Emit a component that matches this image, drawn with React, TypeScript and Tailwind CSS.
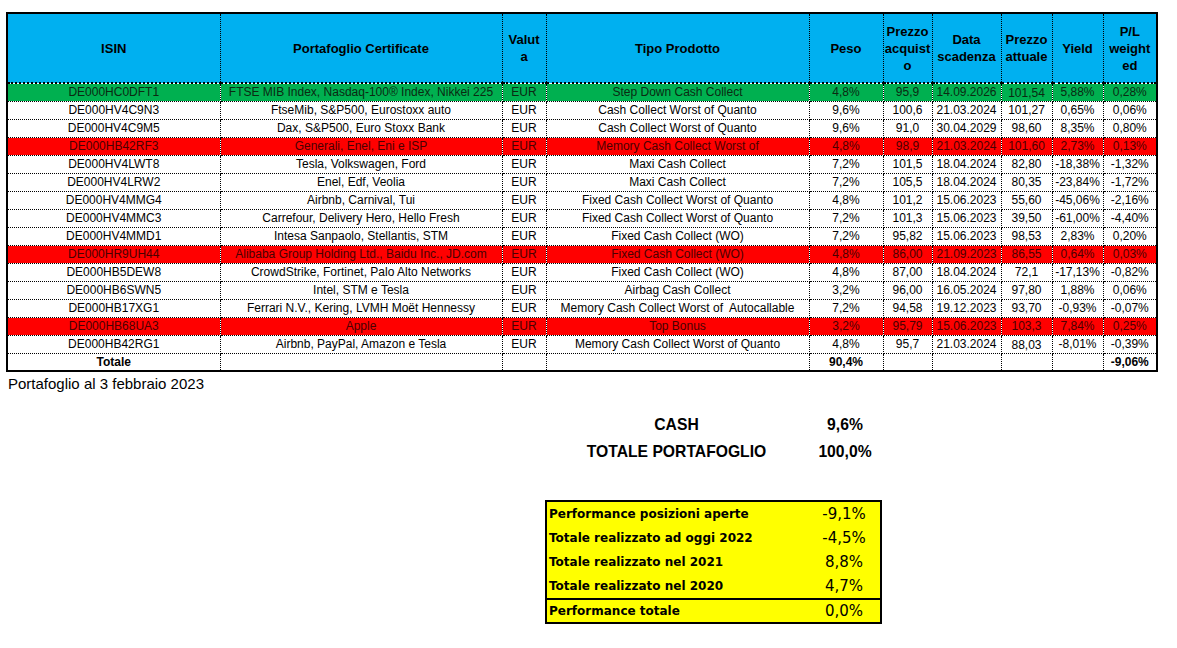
import React from "react";

type Row = {
  isin: string;
  port: string;
  tipo: string;
  peso: string;
  pa: string;
  ds: string;
  pat: string;
  y: string;
  pl: string;
  c?: "green" | "red";
  low?: boolean;
};

const rows: Row[] = [
  { isin: "DE000HC0DFT1", port: "FTSE MIB Index, Nasdaq-100® Index, Nikkei 225", tipo: "Step Down Cash Collect", peso: "4,8%", pa: "95,9", ds: "14.09.2026", pat: "101,54", y: "5,88%", pl: "0,28%", c: "green", low: true },
  { isin: "DE000HV4C9N3", port: "FtseMib, S&P500, Eurostoxx auto", tipo: "Cash Collect Worst of Quanto", peso: "9,6%", pa: "100,6", ds: "21.03.2024", pat: "101,27", y: "0,65%", pl: "0,06%" },
  { isin: "DE000HV4C9M5", port: "Dax, S&P500, Euro Stoxx Bank", tipo: "Cash Collect Worst of Quanto", peso: "9,6%", pa: "91,0", ds: "30.04.2029", pat: "98,60", y: "8,35%", pl: "0,80%" },
  { isin: "DE000HB42RF3", port: "Generali, Enel, Eni e ISP", tipo: "Memory Cash Collect Worst of", peso: "4,8%", pa: "98,9", ds: "21.03.2024", pat: "101,60", y: "2,73%", pl: "0,13%", c: "red" },
  { isin: "DE000HV4LWT8", port: "Tesla, Volkswagen, Ford", tipo: "Maxi Cash Collect", peso: "7,2%", pa: "101,5", ds: "18.04.2024", pat: "82,80", y: "-18,38%", pl: "-1,32%" },
  { isin: "DE000HV4LRW2", port: "Enel, Edf, Veolia", tipo: "Maxi Cash Collect", peso: "7,2%", pa: "105,5", ds: "18.04.2024", pat: "80,35", y: "-23,84%", pl: "-1,72%" },
  { isin: "DE000HV4MMG4", port: "Airbnb, Carnival, Tui", tipo: "Fixed Cash Collect Worst of Quanto", peso: "4,8%", pa: "101,2", ds: "15.06.2023", pat: "55,60", y: "-45,06%", pl: "-2,16%" },
  { isin: "DE000HV4MMC3", port: "Carrefour, Delivery Hero, Hello Fresh", tipo: "Fixed Cash Collect Worst of Quanto", peso: "7,2%", pa: "101,3", ds: "15.06.2023", pat: "39,50", y: "-61,00%", pl: "-4,40%" },
  { isin: "DE000HV4MMD1", port: "Intesa Sanpaolo, Stellantis, STM", tipo: "Fixed Cash Collect (WO)", peso: "7,2%", pa: "95,82", ds: "15.06.2023", pat: "98,53", y: "2,83%", pl: "0,20%" },
  { isin: "DE000HR9UH44", port: "Alibaba Group Holding Ltd., Baidu Inc., JD.com", tipo: "Fixed Cash Collect (WO)", peso: "4,8%", pa: "86,00", ds: "21.09.2023", pat: "86,55", y: "0,64%", pl: "0,03%", c: "red" },
  { isin: "DE000HB5DEW8", port: "CrowdStrike, Fortinet, Palo Alto Networks", tipo: "Fixed Cash Collect (WO)", peso: "4,8%", pa: "87,00", ds: "18.04.2024", pat: "72,1", y: "-17,13%", pl: "-0,82%" },
  { isin: "DE000HB6SWN5", port: "Intel, STM e Tesla", tipo: "Airbag Cash Collect", peso: "3,2%", pa: "96,00", ds: "16.05.2024", pat: "97,80", y: "1,88%", pl: "0,06%" },
  { isin: "DE000HB17XG1", port: "Ferrari N.V., Kering, LVMH Moët Hennessy", tipo: "Memory Cash Collect Worst of  Autocallable", peso: "7,2%", pa: "94,58", ds: "19.12.2023", pat: "93,70", y: "-0,93%", pl: "-0,07%" },
  { isin: "DE000HB68UA3", port: "Apple", tipo: "Top Bonus", peso: "3,2%", pa: "95,79", ds: "15.06.2023", pat: "103,3", y: "7,84%", pl: "0,25%", c: "red" },
  { isin: "DE000HB42RG1", port: "Airbnb, PayPal, Amazon e Tesla", tipo: "Memory Cash Collect Worst of Quanto", peso: "4,8%", pa: "95,7", ds: "21.03.2024", pat: "88,03", y: "-8,01%", pl: "-0,39%", low: true },
];

const widths = [213, 282, 44, 263, 74, 49, 69, 51, 51, 54];

const th =
  "border border-dotted border-black border-b-2 border-b-solid p-0 text-center align-middle font-bold text-[13px] leading-[17px] text-black";
const td =
  "border border-dotted border-black h-[18px] p-0 text-center align-middle whitespace-nowrap overflow-hidden leading-[16px]";

const perf = [
  ["Performance posizioni aperte", "-9,1%"],
  ["Totale realizzato ad oggi 2022", "-4,5%"],
  ["Totale realizzato nel 2021", "8,8%"],
  ["Totale realizzato nel 2020", "4,7%"],
];

export default function App() {
  return (
    <div className="w-[1177px] h-[648px] bg-white overflow-hidden font-['Liberation_Sans',Arial,sans-serif] text-black">
      <div className="pt-[12px] pl-[6px]">
        <table className="table-fixed border-collapse border-2 border-black w-[1150px] text-[12px]">
          <colgroup>
            {widths.map((w, i) => (
              <col key={i} style={{ width: w }} />
            ))}
          </colgroup>
          <thead>
            <tr className="bg-[#00b0f0] h-[70px]">
              <th className={th}>ISIN</th>
              <th className={th}>Portafoglio Certificate</th>
              <th className={th}>
                Valut
                <br />a
              </th>
              <th className={th}>Tipo Prodotto</th>
              <th className={th}>Peso</th>
              <th className={th}>
                Prezzo
                <br />
                acquist
                <br />o
              </th>
              <th className={th}>
                Data
                <br />
                scadenza
              </th>
              <th className={th}>
                Prezzo
                <br />
                attuale
              </th>
              <th className={th}>Yield</th>
              <th className={th}>
                P/L
                <br />
                weight
                <br />
                ed
              </th>
            </tr>
          </thead>
          <tbody>
            {rows.map((r) => {
              const bg =
                r.c === "green"
                  ? "bg-[#00b050] text-[#0b2a12]"
                  : r.c === "red"
                  ? "bg-[#ff0000] text-[#4a0000]"
                  : "bg-white text-black";
              return (
                <tr key={r.isin} className={bg}>
                  <td className={td}>{r.isin}</td>
                  <td className={td}>{r.port}</td>
                  <td className={td}>EUR</td>
                  <td className={`${td} whitespace-pre`}>{r.tipo}</td>
                  <td className={td}>{r.peso}</td>
                  <td className={td}>{r.pa}</td>
                  <td className={td}>{r.ds}</td>
                  <td className={r.low ? `${td} !align-bottom` : td}>{r.pat}</td>
                  <td className={td}>{r.y}</td>
                  <td className={td}>{r.pl}</td>
                </tr>
              );
            })}
            <tr className="bg-white">
              <td className={`${td} font-bold`}>Totale</td>
              <td className={td}></td>
              <td className={td}></td>
              <td className={td}></td>
              <td className={`${td} font-bold`}>90,4%</td>
              <td className={td}></td>
              <td className={td}></td>
              <td className={td}></td>
              <td className={td}></td>
              <td className={`${td} font-bold`}>-9,06%</td>
            </tr>
          </tbody>
        </table>
      </div>

      <div className="pl-[8px] pt-[3px] text-[15px] leading-[18px]">Portafoglio al 3 febbraio 2023</div>

      <div className="ml-[545px] mt-[18px] grid grid-cols-[263px_74px] font-bold text-[15.7px] leading-[27px]">
        <div className="text-center">CASH</div>
        <div className="text-center">9,6%</div>
        <div className="text-center">TOTALE PORTAFOGLIO</div>
        <div className="text-center">100,0%</div>
      </div>

      <div className="ml-[545px] mt-[35px] w-[337px] border-2 border-black bg-[#ffff00] font-['DejaVu_Sans',Verdana,sans-serif]">
        {perf.map(([l, v]) => (
          <div key={l} className="grid grid-cols-[261px_72px] h-[24px] items-center">
            <div className="pl-[2px] font-bold text-[12px]">{l}</div>
            <div className="text-center text-[15px]">{v}</div>
          </div>
        ))}
        <div className="grid grid-cols-[261px_72px] h-[24px] items-center border-t-2 border-black">
          <div className="pl-[2px] font-bold text-[12px]">Performance totale</div>
          <div className="text-center text-[15px]">0,0%</div>
        </div>
      </div>
    </div>
  );
}
